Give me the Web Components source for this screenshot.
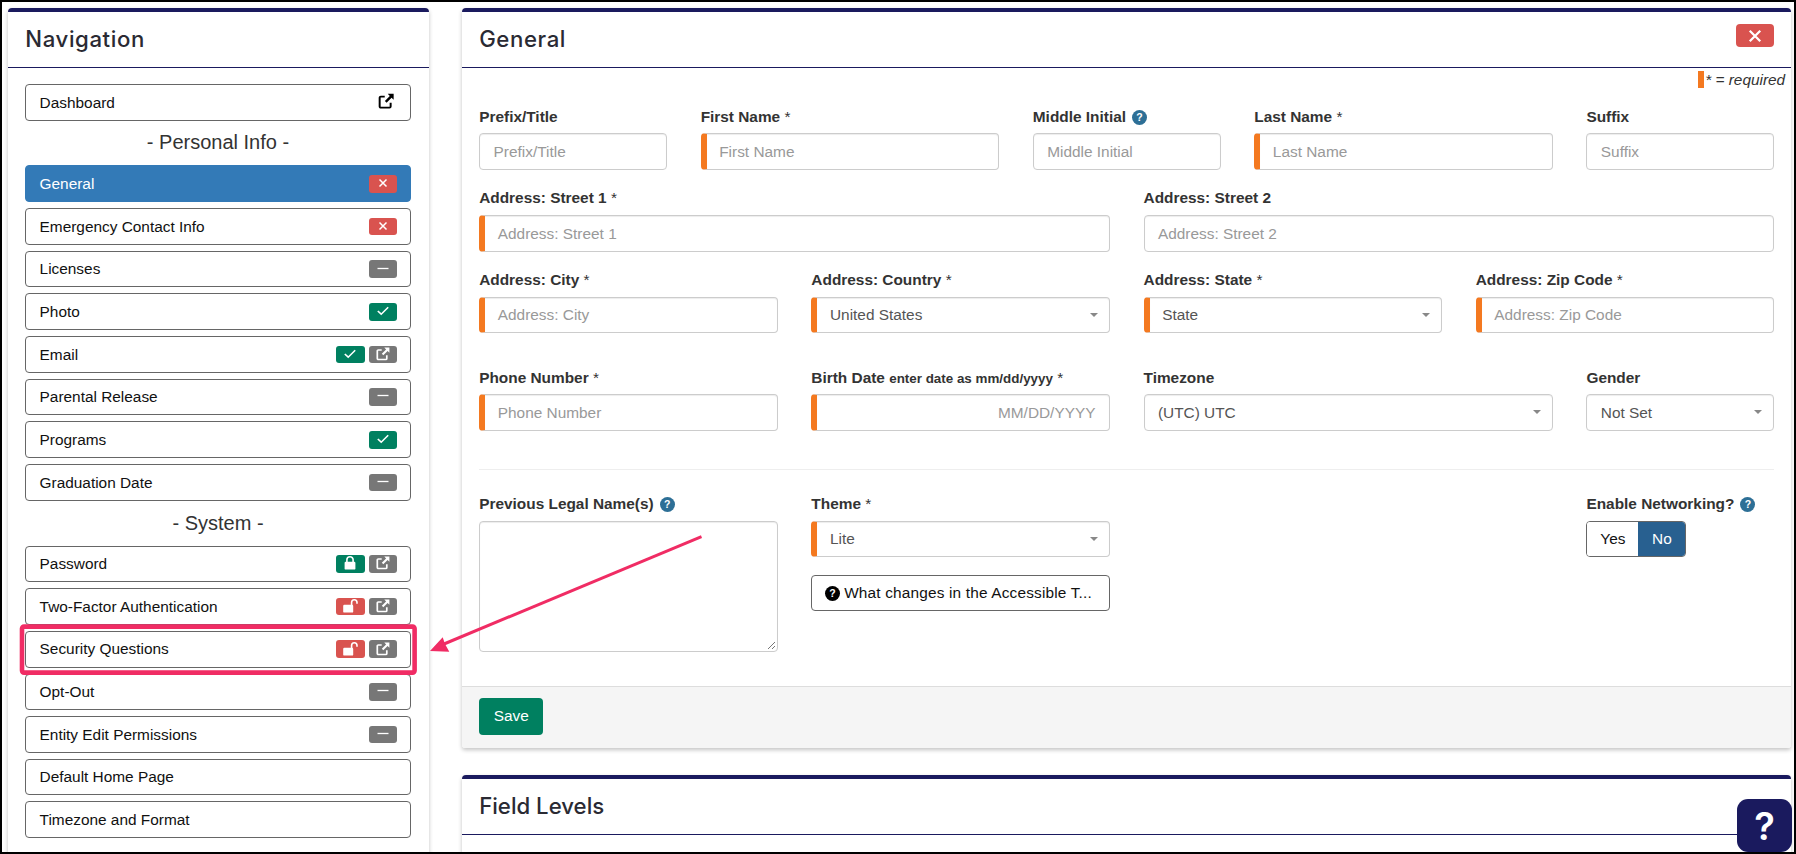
<!DOCTYPE html>
<html lang="en">
<head>
<meta charset="utf-8">
<title>General</title>
<style>
  html, body { margin: 0; padding: 0; height: 100%; overflow: hidden; background: #fff; }
  body { font-family: "Liberation Sans", Arial, sans-serif; font-size: 15.4px; color: #333; }
</style>
</head>
<body>

<app-shell>
  <panel-card slot="nav" heading="Navigation" style="--title-track:.6px">
    <nav-item label="Dashboard" plain><status-badge type="bare" icon="link"></status-badge></nav-item>
    <nav-heading>- Personal Info -</nav-heading>
    <nav-item label="General" active><status-badge type="red" icon="x"></status-badge></nav-item>
    <nav-item label="Emergency Contact Info"><status-badge type="red" icon="x"></status-badge></nav-item>
    <nav-item label="Licenses"><status-badge type="gray" icon="minus"></status-badge></nav-item>
    <nav-item label="Photo"><status-badge type="green" icon="check"></status-badge></nav-item>
    <nav-item label="Email"><status-badge type="green" icon="check"></status-badge><status-badge type="gray" icon="link"></status-badge></nav-item>
    <nav-item label="Parental Release"><status-badge type="gray" icon="minus"></status-badge></nav-item>
    <nav-item label="Programs"><status-badge type="green" icon="check"></status-badge></nav-item>
    <nav-item label="Graduation Date"><status-badge type="gray" icon="minus"></status-badge></nav-item>
    <nav-heading>- System -</nav-heading>
    <nav-item label="Password"><status-badge type="green" icon="lock"></status-badge><status-badge type="gray" icon="link"></status-badge></nav-item>
    <nav-item label="Two-Factor Authentication"><status-badge type="red" icon="unlock"></status-badge><status-badge type="gray" icon="link"></status-badge></nav-item>
    <nav-item label="Security Questions"><status-badge type="red" icon="unlock"></status-badge><status-badge type="gray" icon="link"></status-badge></nav-item>
    <nav-item label="Opt-Out"><status-badge type="gray" icon="minus"></status-badge></nav-item>
    <nav-item label="Entity Edit Permissions"><status-badge type="gray" icon="minus"></status-badge></nav-item>
    <nav-item label="Default Home Page"></nav-item>
    <nav-item label="Timezone and Format"></nav-item>
  </panel-card>

  <panel-card slot="main" heading="General" closable flush style="--title-track:.6px">
    <required-note></required-note>
    <form-grid>
      <form-field span="2" label="Prefix/Title" placeholder="Prefix/Title"></form-field>
      <form-field span="3" label="First Name" required placeholder="First Name"></form-field>
      <form-field span="2" label="Middle Initial" help placeholder="Middle Initial"></form-field>
      <form-field span="3" label="Last Name" required placeholder="Last Name"></form-field>
      <form-field span="2" label="Suffix" placeholder="Suffix"></form-field>

      <form-field span="6" label="Address: Street 1" required placeholder="Address: Street 1"></form-field>
      <form-field span="6" label="Address: Street 2" placeholder="Address: Street 2"></form-field>

      <form-field span="3" label="Address: City" required placeholder="Address: City"></form-field>
      <form-field span="3" label="Address: Country" required kind="select" value="United States"></form-field>
      <form-field span="3" label="Address: State" required kind="select" value="State"></form-field>
      <form-field span="3" label="Address: Zip Code" required placeholder="Address: Zip Code"></form-field>

      <form-field class="gap" span="3" label="Phone Number" required placeholder="Phone Number"></form-field>
      <form-field class="gap" span="3" label="Birth Date" hint="enter date as mm/dd/yyyy" required kind="date" placeholder="MM/DD/YYYY"></form-field>
      <form-field class="gap" span="4" label="Timezone" kind="select" value="(UTC) UTC"></form-field>
      <form-field class="gap" span="2" label="Gender" kind="select" value="Not Set"></form-field>
    </form-grid>
    <form-divider></form-divider>
    <form-grid>
      <form-field span="3" label="Previous Legal Name(s)" help kind="textarea"></form-field>
      <form-field span="3" label="Theme" required kind="select" value="Lite">
        <info-button>What changes in the Accessible T...</info-button>
      </form-field>
      <form-field span="4" kind="none"></form-field>
      <form-field span="2" label="Enable Networking?" help kind="none">
        <yes-no></yes-no>
      </form-field>
    </form-grid>
    <save-bar slot="footer"></save-bar>
  </panel-card>

  <panel-card slot="main" heading="Field Levels" flush style="min-height:140px"></panel-card>
</app-shell>

<script>
  const ICONS = {
    x: '<path d="M4.5 4.5l7 7M11.5 4.5l-7 7" fill="none" stroke="currentColor" stroke-width="1.5"/>',
    minus: '<path d="M2.5 7.5h11" fill="none" stroke="currentColor" stroke-width="1.3"/>',
    check: '<path d="M2.8 8l3.4 3.2 7-7" fill="none" stroke="currentColor" stroke-width="1.6"/>',
    link: '<path d="M11.8 9.2v3.3a1 1 0 0 1-1 1H3.3a1 1 0 0 1-1-1V5a1 1 0 0 1 1-1h3.4" fill="none" stroke="currentColor" stroke-width="1.7"/><path d="M9.3 1.6h5.1v5.1l-1.8-1.8-4.3 4.4-1.5-1.5 4.3-4.4z" fill="currentColor"/>',
    lock: '<path d="M4.9 7V4.8a3.1 3.1 0 0 1 6.2 0V7" fill="none" stroke="currentColor" stroke-width="1.6"/><rect x="2.6" y="6.8" width="10.8" height="7.8" rx="1.2" fill="currentColor"/>',
    unlock: '<path d="M9.6 7V4.4a2.7 2.7 0 0 1 5.4 0v1.3" fill="none" stroke="currentColor" stroke-width="1.6"/><rect x="1.2" y="6.8" width="10" height="7.8" rx="1.2" fill="currentColor"/>'
  };

  class AppShell extends HTMLElement {
    constructor() {
      super();
      this.attachShadow({ mode: 'open' }).innerHTML = `
        <style>
          :host {
            display: block;
            position: relative;
            box-sizing: border-box;
            width: 100%;
            height: 854px;
            border: 2px solid #000;
            overflow: hidden;
            background: #fff;
          }
          .layout {
            display: grid;
            grid-template-columns: 420.4px 1329px;
            column-gap: 33.5px;
            padding: 6px 0 0 6.3px;
            align-items: start;
          }
          .col { display: flex; flex-direction: column; gap: 27.3px; }
          .mark {
            position: absolute;
            left: 0;
            top: 0;
            pointer-events: none;
          }
          .help {
            position: absolute;
            right: 2px;
            bottom: 0;
            width: 55px;
            height: 53px;
            border-radius: 11px;
            background: #1a1a5e;
            color: #fff;
            display: flex;
            align-items: center;
            justify-content: center;
            font: 600 38px Inter, "Liberation Sans", sans-serif;
          }
        </style>
        <div class="layout">
          <div class="col"><slot name="nav"></slot></div>
          <div class="col"><slot name="main"></slot></div>
        </div>
        <svg class="mark" width="1792" height="850" viewBox="2 2 1792 850">
          <rect x="22" y="626.6" width="392.6" height="46" rx="2" fill="none" stroke="#f02c64" stroke-width="4.6"/>
          <path d="M701.5 536.7L444 644" fill="none" stroke="#f02c64" stroke-width="3"/>
          <path d="M430 651L442.7 637.3L445 644L449.3 651.7z" fill="#f02c64"/>
        </svg>
        <div class="help">?</div>
      `;
    }
  }

  class PanelCard extends HTMLElement {
    constructor() {
      super();
      const flush = this.hasAttribute('flush');
      this.attachShadow({ mode: 'open' }).innerHTML = `
        <style>
          :host {
            display: block;
            background: #fff;
            border-top: 4px solid #1a1a5e;
            border-radius: 4px 4px 3px 3px;
            box-shadow: 0 2px 4px rgba(0, 0, 0, .24);
          }
          header {
            box-sizing: border-box;
            height: 56px;
            padding: 0 17px 0 17px;
            display: flex;
            align-items: center;
            justify-content: space-between;
            border-bottom: 1px solid #1a1a5e;
          }
          h2 {
            margin: 0;
            font: 500 22.2px Inter, "Liberation Sans", sans-serif;
            letter-spacing: var(--title-track, 0);
            color: #2a2a33;
            position: relative;
            top: -1.4px;
          }
          .close {
            width: 38px;
            height: 23px;
            position: relative;
            top: -4px;
            margin-right: 0;
            border-radius: 4px;
            background: #d9534f;
            color: #fff;
            display: flex;
            align-items: center;
            justify-content: center;
          }
          .close svg { width: 24px; height: 24px; }
          .body { padding: ${flush ? '0 17px' : '16px 17.7px 20px 16.7px'}; }
          .body.empty { display: none; }
        </style>
        <header>
          <h2>${this.getAttribute('heading') || ''}</h2>
          ${this.hasAttribute('closable') ? `<div class="close"><svg viewBox="0 0 16 16">${ICONS.x}</svg></div>` : ''}
        </header>
        <div class="body${this.children.length ? '' : ' empty'}"><slot></slot></div>
        <slot name="footer"></slot>
      `;
    }
  }

  class NavItem extends HTMLElement {
    constructor() {
      super();
      this.attachShadow({ mode: 'open' }).innerHTML = `
        <style>
          :host {
            display: flex;
            align-items: center;
            justify-content: space-between;
            box-sizing: border-box;
            height: 36.67px;
            margin-bottom: 6px;
            padding: 0 13.4px 0 13.6px;
            border: 1px solid #666;
            border-radius: 4px;
            background: #fff;
            color: #111;
            font-size: 15.4px;
          }
          :host([active]) {
            background: #337ab7;
            border-color: #337ab7;
            color: #fff;
          }
          :host(:last-child) { margin-bottom: 0; }
          .label { padding-top: .6px; }
          .badges { display: flex; gap: 4px; }
        </style>
        <span class="label">${this.getAttribute('label')}</span>
        <span class="badges"><slot></slot></span>
      `;
    }
  }

  class NavHeading extends HTMLElement {
    constructor() {
      super();
      this.attachShadow({ mode: 'open' }).innerHTML = `
        <style>
          :host {
            display: block;
            height: 39px;
            margin-top: -.2px;
            text-align: center;
            font-size: 20px;
            line-height: 32px;
            color: #333;
          }
        </style>
        <slot></slot>
      `;
    }
  }

  class StatusBadge extends HTMLElement {
    constructor() {
      super();
      const icon = ICONS[this.getAttribute('icon')] || '';
      const wide = this.getAttribute('type') === 'gray' || this.getAttribute('icon') === 'x' || !this.previousElementSibling && !this.nextElementSibling;
      this.attachShadow({ mode: 'open' }).innerHTML = `
        <style>
          :host {
            display: flex;
            align-items: center;
            justify-content: center;
            width: ${wide ? 28 : 29}px;
            height: 17.6px;
            border-radius: 3px;
            color: #fff;
          }
          :host([type="red"]) { background: #d9534f; }
          :host([type="gray"]) { background: #777; }
          :host([type="green"]) { background: #008060; }
          :host([type="bare"]) { color: #000; width: 16px; height: 16px; margin-right: 2px; }
          svg { width: 16px; height: 16px; position: relative; top: -.6px; flex: none; }
          :host([type="bare"]) svg { width: 18.5px; height: 18.5px; }
        </style>
        <svg viewBox="0 0 16 16">${icon}</svg>
      `;
    }
  }

  class RequiredNote extends HTMLElement {
    constructor() {
      super();
      this.attachShadow({ mode: 'open' }).innerHTML = `
        <style>
          :host {
            display: flex;
            justify-content: flex-end;
            align-items: stretch;
            height: 17px;
            margin: 2.6px -11px 17.8px 0;
            font-size: 15.4px;
            font-style: italic;
            line-height: 17px;
            color: #333;
          }
          i { width: 6px; background: #f47920; margin-right: 1px; }
        </style>
        <i></i><span>* = required</span>
      `;
    }
  }

  class FormGrid extends HTMLElement {
    constructor() {
      super();
      this.attachShadow({ mode: 'open' }).innerHTML = `
        <style>
          :host {
            display: grid;
            grid-template-columns: repeat(12, 1fr);
            column-gap: 33.7px;
            row-gap: 17px;
          }
        </style>
        <slot></slot>
      `;
    }
  }

  class FormField extends HTMLElement {
    constructor() {
      super();
      const kind = this.getAttribute('kind') || 'input';
      const req = this.hasAttribute('required');
      const label = this.getAttribute('label');
      const hint = this.getAttribute('hint');
      let control = '';
      if (kind === 'input') {
        control = `<div class="box ${req ? 'req' : ''}"><span class="ph">${this.getAttribute('placeholder')}</span></div>`;
      } else if (kind === 'date') {
        control = `<div class="box req date"><span class="ph">${this.getAttribute('placeholder')}</span></div>`;
      } else if (kind === 'select') {
        control = `<div class="box sel ${req ? 'req' : ''}"><span class="val">${this.getAttribute('value')}</span><b class="caret"></b></div>`;
      } else if (kind === 'textarea') {
        control = `<div class="box area"><svg class="grip" width="9" height="9" viewBox="0 0 9 9"><path d="M1 8L8 1M5 8L8 5" stroke="#777" fill="none"/></svg></div>`;
      }
      const labelHtml = label
        ? `<label>${label}${hint ? ` <small>${hint}</small>` : ''}${req ? ' <span class="star">*</span>' : ''}${this.hasAttribute('help') ? '<help-dot></help-dot>' : ''}</label>`
        : '';
      this.attachShadow({ mode: 'open' }).innerHTML = `
        <style>
          :host {
            display: block;
            grid-column: span ${this.getAttribute('span') || 12};
            min-width: 0;
            font-size: 15.4px;
          }
          :host(.gap) { margin-top: 16px; }
          label {
            display: block;
            position: relative;
            top: .5px;
            height: 21.3px;
            margin-bottom: 6.7px;
            font-weight: 700;
            line-height: 21.3px;
            color: #333;
            white-space: nowrap;
          }
          small { font-size: 13.4px; }
          .star { font-weight: 400; }
          .box {
            position: relative;
            box-sizing: border-box;
            height: 36.6px;
            padding: 0 13.4px;
            display: flex;
            align-items: center;
            background: #fff;
            border: 1px solid #ccc;
            border-radius: 4px;
            box-shadow: inset 0 1px 1px rgba(0, 0, 0, .075);
          }
          .box.req { border-left: 6px solid #f47920; padding-left: 12.6px; }
          .box.date { justify-content: flex-end; }
          .box.sel { justify-content: space-between; padding-right: 11px; }
          .box.area { height: 131.4px; }
          .ph, .val { padding-top: .6px; }
          .ph { color: #999; white-space: nowrap; }
          .val { color: #555; }
          .caret {
            width: 0;
            height: 0;
            border-left: 4px solid transparent;
            border-right: 4px solid transparent;
            border-top: 4.5px solid #888;
          }
          .grip { position: absolute; right: 1px; bottom: 1px; }
        </style>
        ${labelHtml}
        ${control}
        <slot></slot>
      `;
    }
  }

  class HelpDot extends HTMLElement {
    constructor() {
      super();
      this.attachShadow({ mode: 'open' }).innerHTML = `
        <style>
          :host {
            display: inline-flex;
            align-items: center;
            justify-content: center;
            width: 15px;
            height: 15px;
            margin-left: 6px;
            border-radius: 50%;
            background: #2d6f96;
            color: #fff;
            font-size: 10.5px;
            font-weight: 700;
            line-height: 1;
            vertical-align: 1px;
          }
        </style>
        ?
      `;
    }
  }

  class InfoButton extends HTMLElement {
    constructor() {
      super();
      this.attachShadow({ mode: 'open' }).innerHTML = `
        <style>
          :host {
            display: flex;
            align-items: center;
            gap: 4px;
            box-sizing: border-box;
            height: 36.6px;
            margin-top: 17.5px;
            padding: 0 12.8px;
            border: 1px solid #666;
            border-radius: 4px;
            color: #111;
            font-size: 15.4px;
            letter-spacing: .17px;
            white-space: nowrap;
            overflow: hidden;
          }
          i {
            flex: none;
            width: 15px;
            height: 15px;
            border-radius: 50%;
            background: #000;
            color: #fff;
            display: flex;
            align-items: center;
            justify-content: center;
            font: 700 10.5px "Liberation Sans", sans-serif;
          }
        </style>
        <i>?</i><span><slot></slot></span>
      `;
    }
  }

  class YesNo extends HTMLElement {
    constructor() {
      super();
      this.attachShadow({ mode: 'open' }).innerHTML = `
        <style>
          :host {
            display: inline-flex;
            box-sizing: border-box;
            height: 36.6px;
            border: 1px solid #666;
            border-radius: 4px;
            overflow: hidden;
            font-size: 15.4px;
          }
          span { display: flex; align-items: center; justify-content: center; }
          .yes { width: 51px; color: #111; background: #fff; }
          .no { width: 47px; color: #fff; background: #286090; }
        </style>
        <span class="yes">Yes</span><span class="no">No</span>
      `;
    }
  }

  class FormDivider extends HTMLElement {
    constructor() {
      super();
      this.attachShadow({ mode: 'open' }).innerHTML = `
        <style>
          :host {
            display: block;
            height: 1px;
            margin: 38.4px 0 22.6px;
            background: #eee;
          }
        </style>
      `;
    }
  }

  class SaveBar extends HTMLElement {
    constructor() {
      super();
      this.attachShadow({ mode: 'open' }).innerHTML = `
        <style>
          :host {
            display: block;
            margin-top: 34px;
            padding: 10.5px 17px 13.5px;
            background: #f5f5f5;
            border-top: 1px solid #ddd;
            border-radius: 0 0 3px 3px;
          }
          button {
            display: block;
            width: 64px;
            height: 37px;
            padding: 0;
            border: 0;
            border-radius: 4px;
            background: #008060;
            color: #fff;
            font: 15.4px "Liberation Sans", sans-serif;
          }
        </style>
        <button type="button">Save</button>
      `;
    }
  }

  customElements.define('help-dot', HelpDot);
  customElements.define('status-badge', StatusBadge);
  customElements.define('nav-item', NavItem);
  customElements.define('nav-heading', NavHeading);
  customElements.define('required-note', RequiredNote);
  customElements.define('form-grid', FormGrid);
  customElements.define('form-field', FormField);
  customElements.define('form-divider', FormDivider);
  customElements.define('info-button', InfoButton);
  customElements.define('yes-no', YesNo);
  customElements.define('save-bar', SaveBar);
  customElements.define('panel-card', PanelCard);
  customElements.define('app-shell', AppShell);
</script>
</body>
</html>
